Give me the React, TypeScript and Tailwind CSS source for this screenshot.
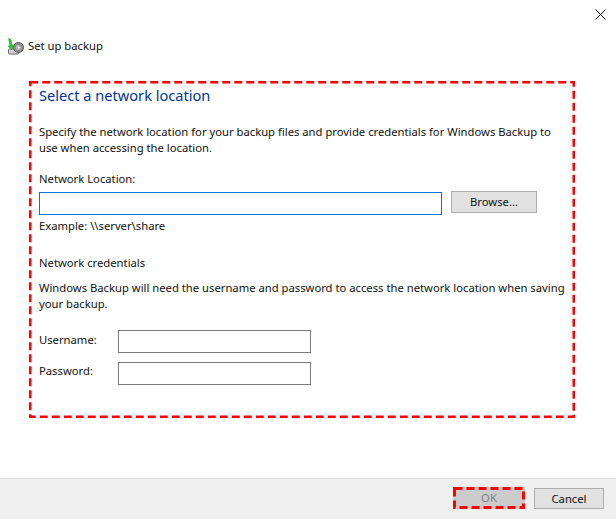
const font = { fontFamily: '"Noto Sans", sans-serif' };

function BackupIcon() {
  return (
    <svg width="17" height="17" viewBox="0 0 17 17" className="shrink-0">
      <rect x="1.5" y="11" width="10" height="5" rx="1" fill="#d4d4d4" stroke="#6b6b6b" />
      <circle cx="11.5" cy="9.5" r="5" fill="#8c8c8c" stroke="#5c5c5c" />
      <circle cx="11.5" cy="9.5" r="2.8" fill="#b9a9b5" />
      <circle cx="11.5" cy="9.5" r="1" fill="#ffffff" />
      <path d="M1.5 0.5 L4 1.5 L5 7 L7.5 7 L4.5 12 L1 8 L3 7.5 Z" fill="#35c935" stroke="#1f8f1f" strokeWidth="0.5" />
    </svg>
  );
}

// red annotation frame drawn over the content
function DashedFrame({ w, h, stroke = 2.5 }: { w: number; h: number; stroke?: number }) {
  return (
    <svg width={w} height={h} className="absolute left-0 top-0 pointer-events-none">
      <rect
        x={stroke / 2}
        y={stroke / 2}
        width={w - stroke}
        height={h - stroke}
        fill="none"
        stroke="#ff0000"
        strokeWidth={stroke}
        strokeDasharray="8 4"
      />
    </svg>
  );
}

export default function App() {
  return (
    <div className="w-[616px] h-[520px] bg-white flex flex-col text-[11.25px] text-[#111] overflow-hidden" style={font}>
      <div className="flex justify-end pt-[9px] pr-[10px] h-[37px]">
        <svg width="11" height="11" viewBox="0 0 11 11" fill="none" stroke="#111" strokeWidth="1">
          <path d="M0.5 0.5 L10.5 10.5 M10.5 0.5 L0.5 10.5" />
        </svg>
      </div>

      <div className="flex items-center gap-[4px] pl-[7px] h-[18px]">
        <BackupIcon />
        <span className="leading-[18px]">Set up backup</span>
      </div>

      <div className="relative ml-[29px] mt-[26px] w-[546px] h-[337px] pl-[10px] pt-[4px] flex flex-col">
        <DashedFrame w={546} h={337} />
        <h1 className="text-[14.6px] leading-[20px] text-[#003399] font-normal">Select a network location</h1>
        <p className="mt-[19px] leading-[16px] w-[520px]">
          Specify the network location for your backup files and provide credentials for Windows Backup to use when accessing the location.
        </p>
        <label className="mt-[15px] leading-[16px]">Network Location:</label>
        <div className="mt-[4px] flex items-start gap-[9px]">
          <div className="mt-[1px] w-[403px] h-[23px] border border-[rgb(0,120,215)] bg-white" />
          <button className="w-[86px] h-[22px] border border-[#adadad] bg-[#e1e1e1] leading-[18px] text-[11.25px]">Browse...</button>
        </div>
        <p className="mt-[3px] leading-[16px]">Example: \\server\share</p>
        <p className="mt-[21px] leading-[16px]">Network credentials</p>
        <p className="mt-[9px] leading-[16px] w-[530px]">
          Windows Backup will need the username and password to access the network location when saving your backup.
        </p>
        <div className="mt-[18px] flex items-start">
          <span className="w-[79px] leading-[16px] mt-[2px]">Username:</span>
          <div className="w-[193px] h-[23px] border border-[#7a7a7a] bg-white" />
        </div>
        <div className="mt-[9px] flex items-start">
          <span className="w-[79px] leading-[16px] mt-[1px]">Password:</span>
          <div className="w-[193px] h-[23px] border border-[#7a7a7a] bg-white" />
        </div>
      </div>

      <div className="mt-[60px] h-[41px] bg-[#f0f0f0] border-t border-[#dfdfdf] flex justify-end items-start pt-[8px] pr-[12px] gap-[9px]">
        <div className="relative w-[72px] h-[22px]">
          <button className="w-full h-full bg-[#cccccc] text-[#838383] text-[11.25px] leading-[22px]">OK</button>
          <DashedFrame w={72} h={22} stroke={3} />
        </div>
        <button className="mt-[1px] w-[70px] h-[21px] border border-[#adadad] bg-[#e1e1e1] text-[11.25px] leading-[17px]">Cancel</button>
      </div>
    </div>
  );
}
